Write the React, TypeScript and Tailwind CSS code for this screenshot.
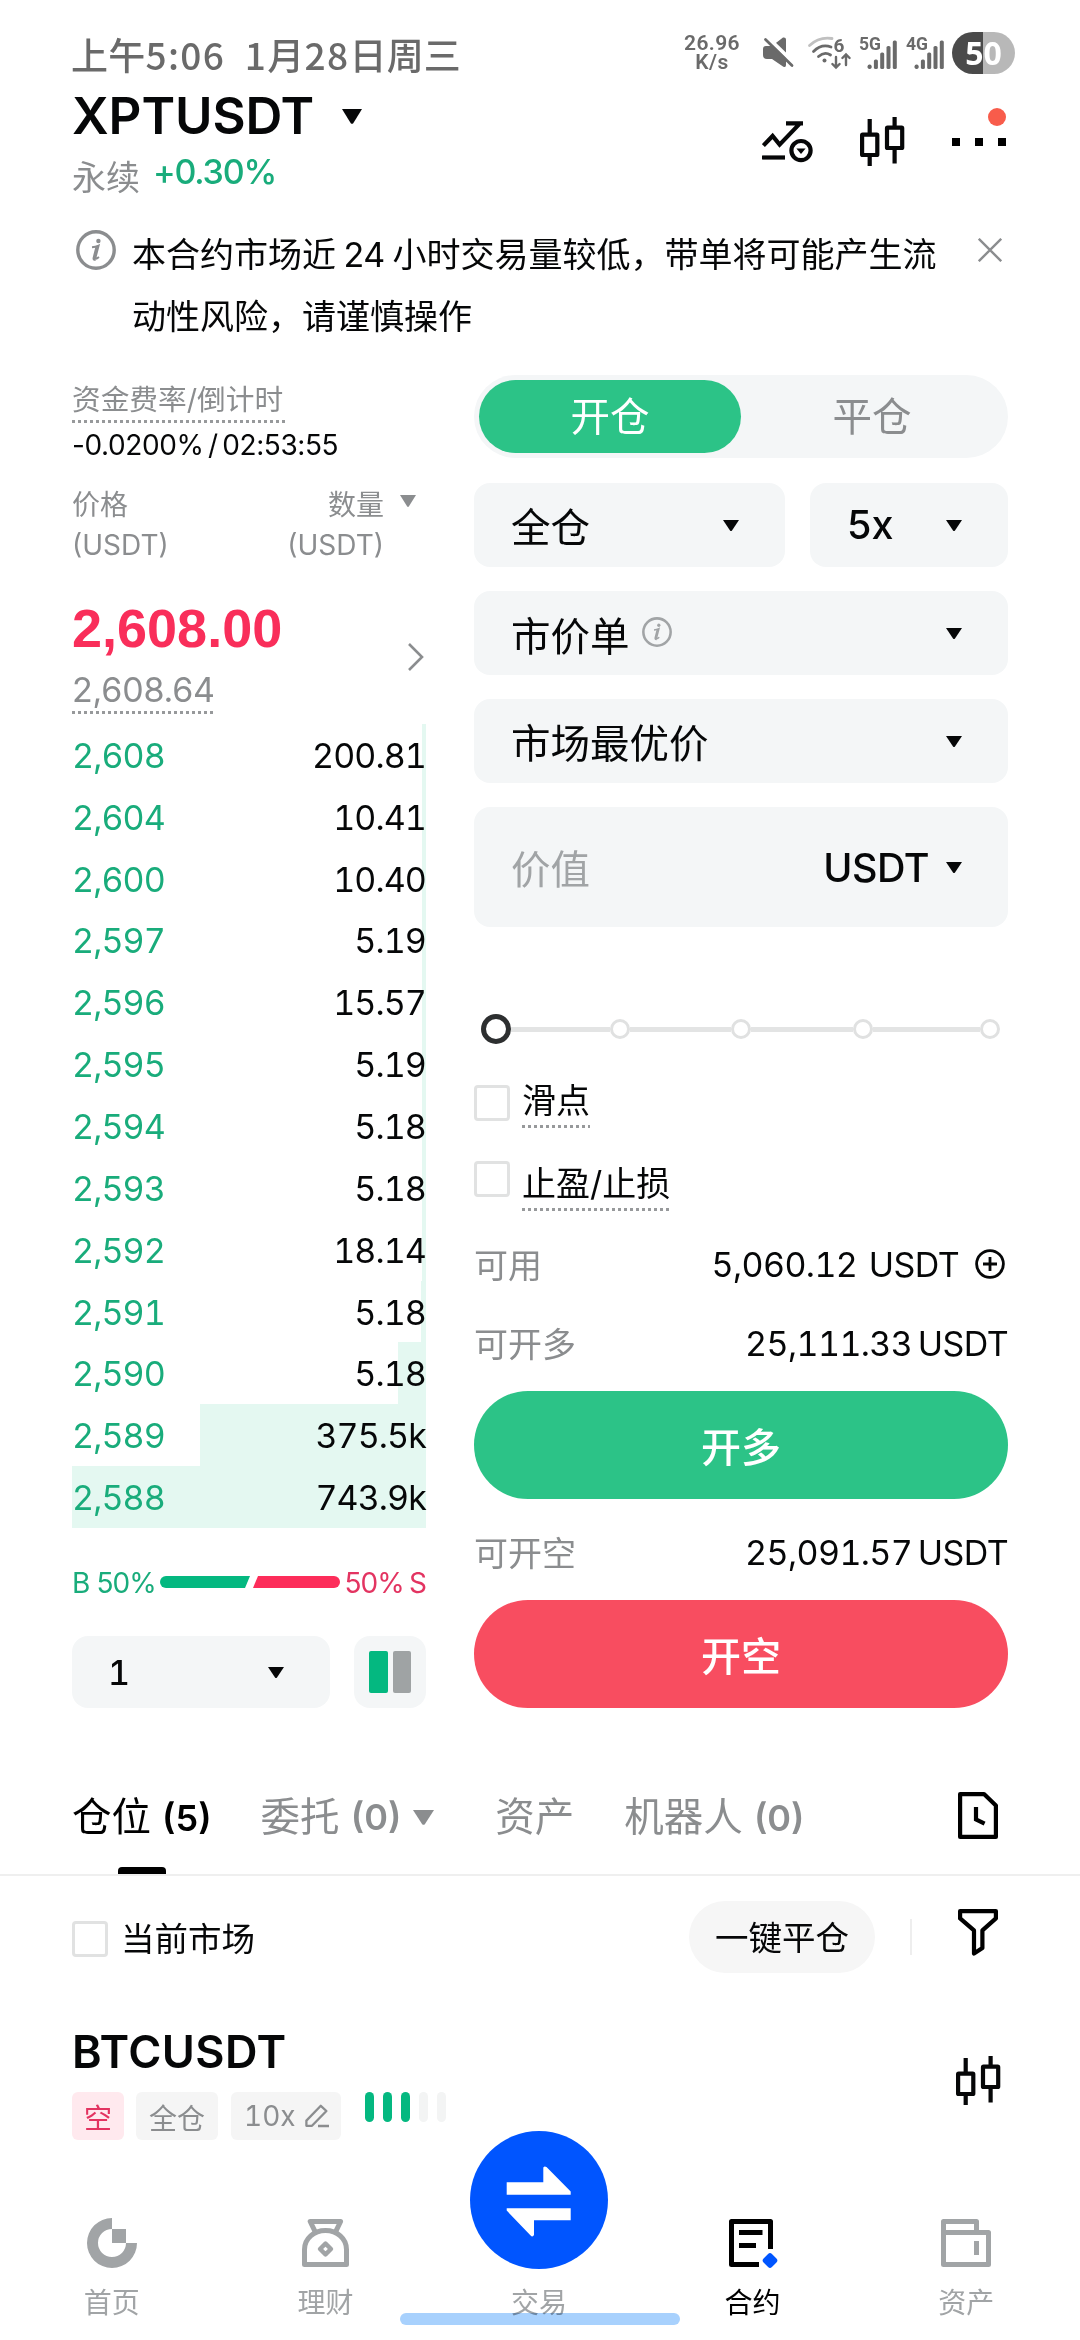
import type { ReactNode } from 'react';
import { clsx } from 'clsx';

interface BookRow {
  price: string;
  amount: string;
  depth: number;
}

// depth is the share of the column filled by the bar, in percent
const bids: BookRow[] = [
  { price: '2,608', amount: '200.81', depth: 1.1 },
  { price: '2,604', amount: '10.41', depth: 1.1 },
  { price: '2,600', amount: '10.40', depth: 1.1 },
  { price: '2,597', amount: '5.19', depth: 1.1 },
  { price: '2,596', amount: '15.57', depth: 1.1 },
  { price: '2,595', amount: '5.19', depth: 1.1 },
  { price: '2,594', amount: '5.18', depth: 1.1 },
  { price: '2,593', amount: '5.18', depth: 1.1 },
  { price: '2,592', amount: '18.14', depth: 1.1 },
  { price: '2,591', amount: '5.18', depth: 1.3 },
  { price: '2,590', amount: '5.18', depth: 7.8 },
  { price: '2,589', amount: '375.5k', depth: 63.8 },
  { price: '2,588', amount: '743.9k', depth: 100 },
];

function Caret({ className }: { className?: string }) {
  return (
    <svg viewBox="0 0 16 11" preserveAspectRatio="none" className={clsx('shrink-0', className)}>
      <path d="M0 0H16L9 10.4Q8 11.4 7 10.4Z" fill="currentColor" />
    </svg>
  );
}

function Dots() {
  return (
    <div className="h-[3px] w-full bg-[repeating-linear-gradient(90deg,#97999b_0_3px,transparent_3px_6px)]" />
  );
}

function Checkbox({ className }: { className?: string }) {
  return <div className={clsx('size-9 shrink-0 rounded-[4px] border-[3px] border-[#e1e2e2]', className)} />;
}

function InfoIcon({ className }: { className?: string }) {
  return (
    <svg viewBox="0 0 40 40" fill="none" className={clsx('shrink-0', className)}>
      <circle cx="20" cy="20" r="18.2" stroke="currentColor" strokeWidth="3.4" />
      <circle cx="22.4" cy="11" r="2.2" fill="currentColor" />
      <path d="M16 17.2Q19.5 17 22.6 15.6L19.6 27Q19 29.4 21 28.4L23 27" stroke="currentColor" strokeWidth="2" />
      <path d="M20.6 17L17.8 28Q17.4 30 19.6 29.6" stroke="currentColor" strokeWidth="2.4" />
    </svg>
  );
}

function CandlesIcon() {
  return (
    <svg viewBox="0 0 46 49" width="46" height="49" fill="none" stroke="currentColor" strokeWidth="4.2">
      <rect x="2.1" y="17.6" width="15.2" height="20.4" rx="0.6" />
      <path d="M9.7 2V17M9.7 38V49" />
      <rect x="27" y="10.6" width="15.2" height="20.4" rx="0.6" />
      <path d="M34.6 0V10M34.6 31V46.6" />
    </svg>
  );
}

function Signal({ label }: { label: string }) {
  return (
    <svg viewBox="0 0 39 34" width="39" height="34" fill="#6a6a6a" className="overflow-visible">
      <text x="0" y="13.5" fontSize="17.5" fontWeight="700" fontFamily="Roboto, sans-serif">
        {label}
      </text>
      <rect x="8.6" y="28.5" width="4" height="4.5" rx="1.8" />
      <rect x="14.9" y="23.5" width="4" height="9.5" rx="1.6" />
      <rect x="21.2" y="16.5" width="4" height="16.5" rx="1.6" />
      <rect x="27.5" y="10" width="4" height="23" rx="1.6" />
      <rect x="33.8" y="4.5" width="4" height="28.5" rx="1.6" />
    </svg>
  );
}

function StatusBar() {
  return (
    <div className="flex h-[80px] shrink-0 items-center pt-[26px] pr-[65px] pl-[71px] font-['Noto_Sans_CJK_SC',sans-serif] text-[#6a6a6a]">
      <div className="pt-[2px] text-[37px] leading-[50px] font-medium tracking-[0.2px] whitespace-pre">
        上午<span className="tracking-[1.4px]">5:06  1</span>月<span className="tracking-[1.4px]">28</span>日周三
      </div>
      <div className="ml-auto w-[60px] text-center font-[Roboto,sans-serif] text-[21px] leading-[19px] font-semibold tracking-[0.4px]">
        26.96
        <br />
        K/s
      </div>
      <svg viewBox="0 0 32 32" width="32" height="32" className="ml-[21px]">
        <path d="M0 12Q0 9 3 9H9L20 0.5Q23 0 23 2.5V28Q23 31 20 29.5L9 22H4Q0 22 0 18Z" fill="#6a6a6a" />
        <path d="M3 -1L32 27" stroke="#fff" strokeWidth="4" />
        <path d="M2.5 2.5L29 28.5" stroke="#6a6a6a" strokeWidth="2.8" strokeLinecap="round" />
      </svg>
      <svg viewBox="0 0 43 34" width="43" height="34" fill="none" strokeWidth="2.8" strokeLinecap="round" className="ml-[13px] overflow-visible">
        <path d="M1.5 9.5Q11 0.5 24 2.5" stroke="#c0c0c0" />
        <path d="M5.5 15.5Q13.5 7.5 23 11" stroke="#6a6a6a" />
        <path d="M10.5 20.5Q16.5 15 22.5 19" stroke="#6a6a6a" />
        <circle cx="16.5" cy="24.5" r="2" fill="#6a6a6a" />
        <text x="25.5" y="15.5" fill="#6a6a6a" fontSize="19" fontWeight="700" fontFamily="Roboto, sans-serif">
          6
        </text>
        <path d="M28 21V31M24.4 28L28 31.6L31.6 28M38 29V18.4M34.4 22L38 18.4L41.6 22" stroke="#6a6a6a" strokeWidth="2.4" />
      </svg>
      <div className="ml-[8px] flex gap-[8px]">
        <Signal label="5G" />
        <Signal label="4G" />
      </div>
      <div className="ml-[7px] flex h-[42px] w-[63px] items-center justify-center rounded-full bg-[linear-gradient(90deg,#4a4a4a_50%,#b8b8b8_50%)] font-['Open_Sans',sans-serif] text-[32px] leading-[42px] font-bold text-white">
        50
      </div>
    </div>
  );
}

function Header() {
  return (
    <div className="flex h-[130px] shrink-0 justify-between px-[72px]">
      <div>
        <div className="flex items-center gap-[28px] pt-[6px]">
          <h1 className="text-[51px] leading-[60px] font-semibold tracking-[-0.1px]">XPTUSDT</h1>
          <Caret className="h-[15px] w-[20px]" />
        </div>
        <div className="flex gap-[13px] text-[34px]">
          <span className="pt-[12px] leading-[40px] text-[#8b8d8f]">永续</span>
          <span className="pt-[6px] leading-[40px] font-medium tracking-[-1.2px] text-[#19ac7b]">+0.30%</span>
        </div>
      </div>
      <div className="flex items-start pt-[37px]">
        <svg viewBox="0 0 51 42" width="51" height="42" fill="none" stroke="currentColor" strokeWidth="4.2" className="mt-[4px]">
          <path d="M1.4 24.6L10.6 15L17.6 23.6L38 2.4M24 2.4H41" />
          <path d="M0 36.5H23" />
          <circle cx="39" cy="29.6" r="9.6" />
          <path d="M34.4 27.4H43.6L39 33Z" fill="currentColor" stroke="none" />
        </svg>
        <div className="ml-[47px]">
          <CandlesIcon />
        </div>
        <div className="relative mt-[21px] mr-[2px] ml-[46px] flex w-[54px] justify-between">
          <div className="size-2 bg-black" />
          <div className="size-2 bg-black" />
          <div className="size-2 bg-black" />
          <div className="absolute -top-[30px] right-0 size-[18px] rounded-full bg-[#f85c4b]" />
        </div>
      </div>
    </div>
  );
}

function Notice() {
  return (
    <div className="flex h-[165px] shrink-0 pt-[14px] pr-[78px] pl-[76px]">
      <InfoIcon className="mt-[6px] size-10 text-[#8b8d8f]" />
      <p className="ml-[16px] flex-1 text-[34px] leading-[62px] whitespace-nowrap [word-spacing:-2px]">
        本合约市场近 <span className="tracking-[-0.4px]">24</span> 小时交易量较低，带单将可能产生流
        <br />
        动性风险，请谨慎操作
      </p>
      <svg viewBox="0 0 24 24" width="24" height="24" stroke="#8b8d8f" strokeWidth="2.4" className="mt-[14px]">
        <path d="M0.8 0.8L23.2 23.2M23.2 0.8L0.8 23.2" />
      </svg>
    </div>
  );
}

function OrderBook() {
  return (
    <div className="flex w-[354px] flex-col">
      <div className="w-[213px] pt-[5px]">
        <div className="text-[28.7px] leading-[40px] whitespace-nowrap text-[#8b8d8f]">资金费率/倒计时</div>
        <Dots />
      </div>
      <div className="text-[28px] leading-[44px] tracking-[-0.4px] [word-spacing:-3px]">-0.0200% / 02:53:55</div>

      <div className="mt-[18px] flex justify-between text-[28px] leading-[40px] text-[#8b8d8f]">
        <div>
          <div>价格</div>
          <div>(USDT)</div>
        </div>
        <div className="flex">
          <div className="text-right">
            <div>数量</div>
            <div>(USDT)</div>
          </div>
          <Caret className="mt-[10px] mr-[10px] ml-[16px] h-[12px] w-[16px]" />
        </div>
      </div>

      <div className="mt-[33px] flex h-[126px] items-start justify-between">
        <div>
          <div className="font-['Liberation_Sans',sans-serif] text-[54px] leading-[60px] font-bold text-[#f92e5a]">2,608.00</div>
          <div className="mt-[10px] w-[142px]">
            <div className="h-[43px] text-[34px] leading-[43px] tracking-[-0.2px] text-[#8b8d8f]">2,608.64</div>
            <Dots />
          </div>
        </div>
        <svg viewBox="0 0 16 28" width="16" height="28" fill="none" stroke="#8b8d8f" strokeWidth="2.6" className="mt-[45px] mr-[2px]">
          <path d="M1 1L14 14L1 27" />
        </svg>
      </div>

      <div className="flex h-[804px] flex-col">
        {bids.map((row) => (
          <div key={row.price} className="relative flex flex-1 items-center justify-between pt-[1px] text-[34px] tracking-[-0.9px] tabular-nums">
            <div className="absolute inset-y-0 right-0 bg-[#e4f8f1]" style={{ width: `${row.depth}%` }} />
            <span className="relative text-[#19ac7b]">{row.price}</span>
            <span className="relative">{row.amount}</span>
          </div>
        ))}
      </div>

      <div className="mt-[34px] flex h-[40px] items-center text-[28px] tracking-[-0.9px]">
        <span className="w-[88px] pt-[2px] text-[#19ac7b]">B 50%</span>
        <svg viewBox="0 0 180 12" width="180" height="12">
          <path d="M6 0H90L85 12H6A6 6 0 0 1 6 0Z" fill="#04b880" />
          <path d="M98 0H174A6 6 0 0 1 174 12H93Z" fill="#fd2d5a" />
        </svg>
        <span className="flex-1 pt-[2px] text-right whitespace-nowrap text-[#e33461] [word-spacing:-2px]">50% S</span>
      </div>

      <div className="mt-[34px] flex h-[72px] justify-between">
        <div className="flex w-[258px] items-center justify-between rounded-[16px] bg-[#f4f6f7] pr-[46px] pl-[36px]">
          <span className="text-[34px] font-medium tabular-nums">1</span>
          <Caret className="h-[11px] w-[16px]" />
        </div>
        <div className="flex w-[72px] items-center justify-center gap-[5px] rounded-[16px] bg-[#f4f6f7]">
          <div className="h-[42px] w-[19px] rounded-[2px] bg-[#04b880]" />
          <div className="h-[42px] w-[18px] rounded-[2px] bg-[#9fa3a4]" />
        </div>
      </div>
    </div>
  );
}

function Select({ className, children }: { className?: string; children: ReactNode }) {
  return (
    <div className={clsx('flex items-center justify-between rounded-[16px] bg-[#f4f6f7] pr-[46px] pl-[37px] text-[39.5px]', className)}>
      {children}
      <Caret className="h-[11px] w-[16px]" />
    </div>
  );
}

function Option({ label, className, boxClass }: { label: string; className?: string; boxClass?: string }) {
  return (
    <div className={clsx('flex items-start', className)}>
      <Checkbox className={boxClass} />
      <div className="ml-[12px]">
        <div className="mb-[4px] pt-[1px] text-[34px] leading-[40px]">{label}</div>
        <Dots />
      </div>
    </div>
  );
}

function Balance({ label, value, className, children }: { label: string; value: string; className?: string; children?: ReactNode }) {
  return (
    <div className={clsx('flex h-[50px] items-center text-[34px]', className)}>
      <span className="pt-[2px] text-[#8b8d8f]">{label}</span>
      <span className={clsx('ml-auto tracking-[-0.6px] tabular-nums', children ? '[word-spacing:3px]' : '[word-spacing:-3px]')}>
        {value}
      </span>
      {children}
    </div>
  );
}

function OrderForm() {
  return (
    <div className="flex w-[534px] flex-col">
      <div className="flex h-[83px] rounded-full bg-[#f4f6f7] p-[5px] text-[39.5px]">
        <div className="flex w-[262px] items-center justify-center rounded-full bg-[#2cc387] pt-[3px] text-white">开仓</div>
        <div className="flex flex-1 items-center justify-center pt-[3px] text-[#8b8d8f]">平仓</div>
      </div>

      <div className="mt-[25px] flex gap-[25px]">
        <Select className="h-[84px] w-[311px]">
          <span className="pt-[8px]">全仓</span>
        </Select>
        <Select className="h-[84px] flex-1">
          <span className="pt-[2px] font-medium">5x</span>
        </Select>
      </div>
      <Select className="mt-[24px] h-[84px]">
        <span className="flex items-center">
          <span className="pt-[9px]">市价单</span>
          <InfoIcon className="mb-[2px] ml-[12px] size-[30px] text-[#a1a4a6]" />
        </span>
      </Select>
      <Select className="mt-[24px] h-[84px]">
        <span className="pt-[8px]">市场最优价</span>
      </Select>
      <Select className="mt-[24px] h-[120px]">
        <span className="pt-[8px] text-[#a1a4a6]">价值</span>
        <span className="mr-[17px] ml-auto pt-[3px] font-medium tracking-[-0.5px]">USDT</span>
      </Select>

      <div className="mt-[87px] flex h-[30px] items-center pr-[8px] pl-[7px]">
        <div className="size-[30px] rounded-full border-[5px] border-[#2d2f30]" />
        <div className="h-[5px] w-[99px] bg-[#e3e4e4]" />
        <div className="size-[20px] rounded-full border-[3px] border-[#e0e1e1]" />
        <div className="h-[5px] w-[101px] bg-[#e3e4e4]" />
        <div className="size-[20px] rounded-full border-[3px] border-[#e0e1e1]" />
        <div className="h-[5px] w-[102px] bg-[#e3e4e4]" />
        <div className="size-[20px] rounded-full border-[3px] border-[#e0e1e1]" />
        <div className="h-[5px] flex-1 bg-[#e3e4e4]" />
        <div className="size-[20px] rounded-full border-[3px] border-[#e0e1e1]" />
      </div>

      <Option label="滑点" className="mt-[36px]" boxClass="mt-[5px]" />
      <Option label="止盈/止损" className="mt-[35px]" boxClass="-mt-[2px]" />

      <Balance label="可用" value="5,060.12 USDT" className="mt-[28px]">
        <svg viewBox="0 0 30 30" width="30" height="30" fill="none" stroke="currentColor" strokeWidth="2.8" className="mr-[3px] ml-[16px]">
          <circle cx="15" cy="15" r="13.4" />
          <path d="M15 8V22M8 15H22" />
        </svg>
      </Balance>
      <Balance label="可开多" value="25,111.33 USDT" className="mt-[29px]" />
      <div className="mt-[23px] flex h-[108px] items-center justify-center rounded-full bg-[#2cc387] pt-[5px] text-[40px] font-medium text-white">
        开多
      </div>
      <Balance label="可开空" value="25,091.57 USDT" className="mt-[28px]" />
      <div className="mt-[23px] flex h-[108px] items-center justify-center rounded-full bg-[#f84d60] pt-[5px] text-[40px] font-medium text-white">
        开空
      </div>
    </div>
  );
}

function Tabs() {
  return (
    <div className="flex h-[168px] shrink-0 items-start border-b-2 border-[#efefef] pt-[79px] pl-[72px] text-[39.5px] leading-[60px] whitespace-pre text-[#8b8d8f]">
      <div className="relative h-[87px] text-black">
        仓位 <span className="text-[36px] font-semibold">(5)</span>
        <div className="absolute bottom-0 left-[46px] h-[7px] w-[48px] rounded-t-[4px] bg-black" />
      </div>
      <div className="ml-[49px] flex items-center">
        委托 <span className="text-[36px] font-semibold">(0)</span>
        <Caret className="ml-[12px] h-[15px] w-[21px]" />
      </div>
      <div className="ml-[61px]">资产</div>
      <div className="ml-[50px]">
        机器人 <span className="text-[36px] font-semibold">(0)</span>
      </div>
      <svg viewBox="0 0 40 47" width="40" height="47" fill="none" stroke="#000" strokeWidth="4.2" strokeLinejoin="round" className="mt-[5px] mr-[82px] ml-auto">
        <path d="M2.1 2.1H26L37.9 13.6V44.9H2.1Z" />
        <path d="M18 15V27.4L26.6 31.6" strokeLinejoin="miter" />
      </svg>
    </div>
  );
}

function PositionFilter() {
  return (
    <div className="flex h-[121px] shrink-0 items-center pr-[82px] pl-[72px] text-[33.5px]">
      <Checkbox className="mt-[5px]" />
      <span className="ml-[13px] pt-[6px]">当前市场</span>
      <div className="ml-auto flex h-[72px] w-[186px] items-center justify-center rounded-full bg-[#f6f6f6] pt-[4px]">一键平仓</div>
      <div className="ml-[35px] h-[36px] w-[2px] bg-[#eeeeee]" />
      <svg viewBox="0 0 40 47" width="40" height="47" fill="none" stroke="#000" strokeWidth="4.2" strokeLinejoin="round" className="mb-[8px] ml-[46px]">
        <path d="M2.1 2.1H37.9V9.4L24.4 21.4V39L16 44.6V21.4L2.1 9.4Z" />
      </svg>
    </div>
  );
}

function Position() {
  return (
    <div className="flex h-[204px] shrink-0 justify-between pr-[78px] pl-[72px]">
      <div>
        <h2 className="pt-[25px] text-[45px] leading-[60px] font-semibold tracking-[0.4px]">BTCUSDT</h2>
        <div className="mt-[10px] flex items-start text-[28px] text-[#8b8d8f]">
          <div className="h-[48px] rounded-[6px] bg-[#ffe9ee] px-[12px] pt-[3px] leading-[48px] text-[#e33461]">空</div>
          <div className="ml-[12px] h-[48px] rounded-[6px] bg-[#f5f5f5] px-[13px] pt-[3px] leading-[48px]">全仓</div>
          <div className="ml-[13px] flex h-[48px] w-[110px] items-center rounded-[6px] bg-[#f5f5f5] pl-[13px] tabular-nums">
            10x
            <svg viewBox="0 0 24 24" width="24" height="24" fill="none" stroke="currentColor" strokeWidth="2.3" strokeLinejoin="round" className="ml-[9px]">
              <path d="M1.4 21.8V16.6L15.8 1.8L21.4 7L7 21.8ZM13 22H24" />
            </svg>
          </div>
          <div className="ml-[24px] flex gap-[9px]">
            <div className="h-[30px] w-[9px] rounded-full bg-[#04b880]" />
            <div className="h-[30px] w-[9px] rounded-full bg-[#04b880]" />
            <div className="h-[30px] w-[9px] rounded-full bg-[#04b880]" />
            <div className="h-[30px] w-[9px] rounded-full bg-[#f3f4f4]" />
            <div className="h-[30px] w-[9px] rounded-full bg-[#f3f4f4]" />
          </div>
        </div>
      </div>
      <div className="pt-[59px]">
        <CandlesIcon />
      </div>
    </div>
  );
}

function NavItem({ label, active, children }: { label: string; active?: boolean; children?: ReactNode }) {
  return (
    <div className={clsx('flex flex-1 flex-col items-center pt-[17px] text-[28px]', active ? 'text-black' : 'text-[#a1a4a6]')}>
      <div className="h-[50px]">{children}</div>
      <div className="mt-[15px] leading-[40px]">{label}</div>
    </div>
  );
}

function BottomNav() {
  return (
    <div className="relative flex h-[140px] shrink-0 pr-[7px] pl-[5px]">
      <NavItem label="首页">
        <svg viewBox="0 0 50 50" width="50" height="50" fill="currentColor">
          <path d="M25 0A25 25 0 1 0 50 25H39A14 14 0 1 1 25 11Z" />
          <rect x="25" y="11" width="14" height="14" />
        </svg>
      </NavItem>
      <NavItem label="理财">
        <svg viewBox="0 0 47 50" width="47" height="50" fill="none" stroke="currentColor" strokeWidth="5" strokeLinejoin="round">
          <path d="M13.6 14.6L8.2 3.5H38.6L33.2 14.6" />
          <path d="M2.5 46.5V31.6C2.5 20.4 12 12.6 23.5 12.6S44.5 20.4 44.5 31.6V46.5Z" />
          <path d="M23.5 25.6L29 31L23.5 36.4L18 31Z" strokeWidth="4.4" />
        </svg>
      </NavItem>
      <NavItem label="交易" />
      <NavItem label="合约" active>
        <svg viewBox="0 0 50 50" width="50" height="50" fill="none" stroke="currentColor" strokeWidth="5" strokeLinejoin="round">
          <path d="M31 46.5H3.5V3.5H42.5V31" />
          <path d="M11 14.5H34.5M11 27.5H28" />
          <path d="M42 38L46.5 42.5L42 47L37.5 42.5Z" fill="#0055ff" stroke="#0055ff" strokeWidth="5.5" />
        </svg>
      </NavItem>
      <NavItem label="资产">
        <svg viewBox="0 0 50 50" width="50" height="50" fill="none" stroke="currentColor" strokeWidth="5" strokeLinejoin="round">
          <path d="M2.5 14.5V3.5H35.5V14.5" />
          <path d="M2.5 14.5H47.5V46.5H2.5Z" />
          <path d="M35.5 23V37" />
        </svg>
      </NavItem>

      {/* Floating trade button */}
      <div className="absolute -top-[70px] left-[470px] size-[138px] rounded-full bg-[#0055ff]">
        <svg viewBox="0 0 138 138" fill="#fff">
          <path d="M36.7 51.3H73.3V36.5Q74.5 34.6 76.5 36L100.7 60.4V63.8H36.7Z" />
          <path d="M100.7 77.3V89.3H64V104Q62.6 106.6 60.6 104.6L36.7 79.6V77.3Z" />
        </svg>
      </div>

      {/* Gesture bar */}
      <div className="absolute top-[112px] left-[400px] h-[12px] w-[280px] rounded-full bg-[#a8d1fd] mix-blend-multiply" />
    </div>
  );
}

export default function App() {
  return (
    <div className="flex h-[2340px] w-[1080px] flex-col overflow-hidden bg-white font-['Inter','Noto_Sans_CJK_SC',sans-serif] text-[#060708]">
      <StatusBar />
      <Header />
      <Notice />
      <div className="flex h-[1333px] shrink-0 justify-between px-[72px]">
        <OrderBook />
        <OrderForm />
      </div>
      <Tabs />
      <PositionFilter />
      <Position />
      <BottomNav />
    </div>
  );
}
